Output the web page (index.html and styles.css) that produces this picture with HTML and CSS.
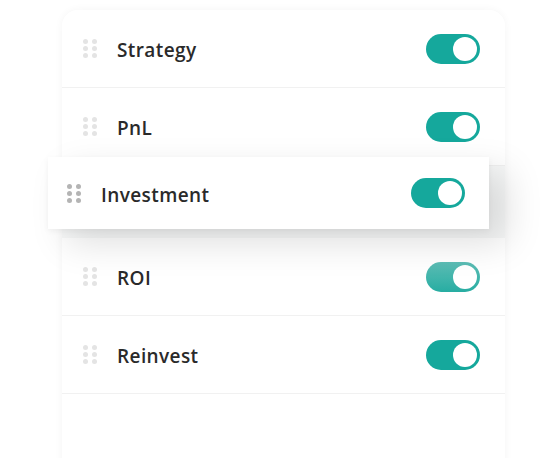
FILE: index.html
```html
<!DOCTYPE html>
<html>
<head>
<meta charset="utf-8">
<link rel="stylesheet" href="styles.css">
</head>
<body>
<div class="stage">
  <div class="card">
    <div class="row">
      <div class="handle"><i></i><i></i><i></i><i></i><i></i><i></i></div>
      <span class="label">Strategy</span>
      <span class="toggle"><span class="knob"></span></span>
    </div>
    <div class="row">
      <div class="handle"><i></i><i></i><i></i><i></i><i></i><i></i></div>
      <span class="label">PnL</span>
      <span class="toggle"><span class="knob"></span></span>
    </div>
    <div class="slot"></div>
    <div class="row">
      <div class="handle"><i></i><i></i><i></i><i></i><i></i><i></i></div>
      <span class="label">ROI</span>
      <span class="toggle faded"><span class="knob"></span></span>
    </div>
    <div class="row">
      <div class="handle"><i></i><i></i><i></i><i></i><i></i><i></i></div>
      <span class="label">Reinvest</span>
      <span class="toggle"><span class="knob"></span></span>
    </div>
  </div>
  <div class="row dragging">
    <div class="handle dark"><i></i><i></i><i></i><i></i><i></i><i></i></div>
    <span class="label">Investment</span>
    <span class="toggle"><span class="knob"></span></span>
  </div>
</div>
</body>
</html>
```
FILE: styles.css
```css
html, body {
  margin: 0;
  padding: 0;
  background: #ffffff;
  overflow: hidden;
}
body {
  font-family: "Open Sans", "Liberation Sans", sans-serif;
  width: 557px;
  height: 458px;
}
.stage {
  position: relative;
  padding: 10px 0 0 62px;
}
.card {
  width: 443px;
  height: 470px;
  border-radius: 16px 16px 0 0;
  background: #fff;
  box-shadow: 0 0 8px rgba(0, 0, 0, 0.045);
  overflow: hidden;
}
.row {
  display: flex;
  align-items: center;
  height: 77px;
  padding: 0 25px 0 21px;
  border-bottom: 1px solid #f1f1f1;
  background: #fff;
}
.slot {
  height: 72px;
  background: #f7f8f8;
}
.handle {
  display: grid;
  grid-template-columns: 5px 5px;
  grid-auto-rows: 5px;
  gap: 2px 4px;
  width: 14px;
  margin-right: 20px;
}
.handle i {
  display: block;
  width: 5px;
  height: 5px;
  border-radius: 50%;
  background: #e4e4e4;
}
.handle.dark i {
  background: #b4b4b4;
}
.label {
  flex: 1;
  font-size: 19px;
  font-weight: 600;
  color: #2a2a2a;
  letter-spacing: 0.4px;
  padding-top: 3px;
}
.toggle {
  display: flex;
  justify-content: flex-end;
  align-items: center;
  width: 54px;
  height: 30px;
  box-sizing: border-box;
  padding: 3px;
  border-radius: 15px;
  background: #15a89c;
}
.toggle.faded {
  background: linear-gradient(#5dbdb5, #27ada2);
}
.knob {
  width: 24px;
  height: 24px;
  border-radius: 50%;
  background: #fff;
}
.dragging {
  position: absolute;
  left: 48px;
  top: 157px;
  width: 441px;
  height: 72px;
  box-sizing: border-box;
  padding: 0 24px 0 19px;
  border-bottom: none;
  box-shadow: 18px 14px 36px rgba(0, 0, 0, 0.13), 0 2px 6px rgba(0, 0, 0, 0.05);
}
```
